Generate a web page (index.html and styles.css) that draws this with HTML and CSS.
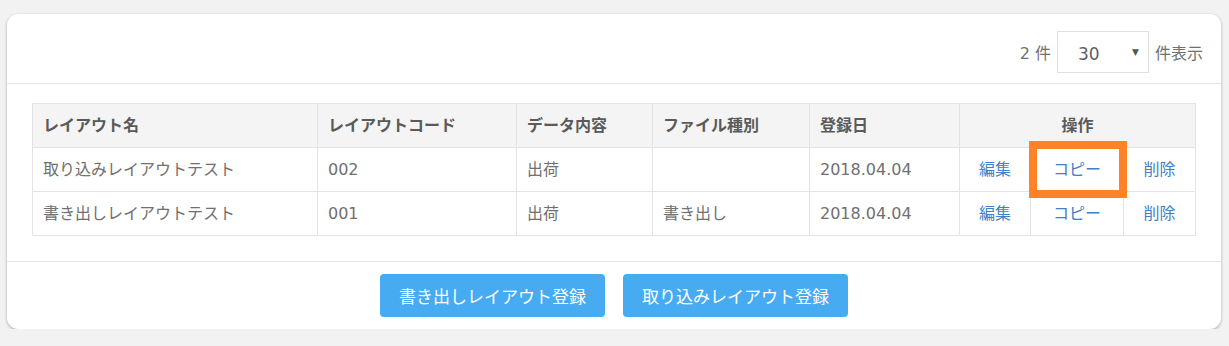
FILE: index.html
```html
<!DOCTYPE html>
<html lang="ja">
<head>
<meta charset="utf-8">
<title>レイアウト一覧</title>
<link rel="stylesheet" href="styles.css">
</head>
<body>
<div class="card">
  <div class="card-head">
    <span class="count">2 件</span>
    <div class="select">
      <span class="select-value">30</span>
      <span class="select-arrow">▼</span>
    </div>
    <span class="count">件表示</span>
  </div>
  <div class="card-body">
    <table class="list">
      <colgroup>
        <col class="c1"><col class="c2"><col class="c3"><col class="c4"><col class="c5"><col class="c6"><col class="c7"><col class="c8">
      </colgroup>
      <thead>
        <tr>
          <th>レイアウト名</th>
          <th>レイアウトコード</th>
          <th>データ内容</th>
          <th>ファイル種別</th>
          <th>登録日</th>
          <th colspan="3" class="center">操作</th>
        </tr>
      </thead>
      <tbody>
        <tr>
          <td>取り込みレイアウトテスト</td>
          <td>002</td>
          <td>出荷</td>
          <td></td>
          <td>2018.04.04</td>
          <td class="center"><a href="#">編集</a></td>
          <td class="center highlight-cell"><a href="#">コピー</a><span class="highlight"></span></td>
          <td class="center"><a href="#">削除</a></td>
        </tr>
        <tr>
          <td>書き出しレイアウトテスト</td>
          <td>001</td>
          <td>出荷</td>
          <td>書き出し</td>
          <td>2018.04.04</td>
          <td class="center"><a href="#">編集</a></td>
          <td class="center"><a href="#">コピー</a></td>
          <td class="center"><a href="#">削除</a></td>
        </tr>
      </tbody>
    </table>
  </div>
  <div class="card-foot">
    <button class="btn">書き出しレイアウト登録</button>
    <button class="btn">取り込みレイアウト登録</button>
  </div>
</div>
</body>
</html>
```
FILE: styles.css
```css
html, body {
  margin: 0;
  padding: 0;
  background: #f2f2f2;
}
body {
  padding: 14px 8px 0 7px;
  font-family: "DejaVu Sans", "Noto Sans CJK JP", sans-serif;
  font-size: 16px;
  color: #707070;
}
.card {
  background: #fff;
  border-radius: 11px;
  box-shadow: 0 1px 3px rgba(0, 0, 0, 0.32);
  height: 315px;
  box-sizing: border-box;
}
.card-head {
  display: flex;
  justify-content: flex-end;
  align-items: center;
  gap: 6px;
  padding: 17px 18px 10px;
  border-bottom: 1px solid #e6e6e6;
}
.count {
  font-size: 16px;
  color: #707070;
}
.select {
  width: 92px;
  height: 42px;
  box-sizing: border-box;
  border: 1px solid #e0e0e0;
  display: flex;
  align-items: center;
  justify-content: space-between;
  padding: 0 9px 0 20px;
  color: #606060;
}
.select-value {
  font-size: 17px;
  padding-top: 3px;
}
.select-arrow {
  font-size: 9px;
  color: #555;
}
.card-body {
  padding: 19px 25px 25px;
}
.list {
  width: 1163px;
  border-collapse: collapse;
  table-layout: fixed;
}
.c1 { width: 285px; }
.c2 { width: 199px; }
.c3 { width: 136px; }
.c4 { width: 157px; }
.c5 { width: 150px; }
.c6 { width: 71px; }
.c7 { width: 93px; }
.c8 { width: 72px; }
.list th, .list td {
  border: 1px solid #e3e3e3;
  padding: 10px 10px;
  line-height: 23px;
  text-align: left;
  white-space: nowrap;
}
.list th {
  background: #f4f4f4;
  color: #5a5a5a;
  font-weight: bold;
}
.list td {
  color: #707070;
}
.list .center {
  text-align: center;
}
.list a {
  color: #4080c4;
  text-decoration: none;
}
.highlight-cell {
  position: relative;
}
.highlight {
  position: absolute;
  left: -2px;
  top: -7px;
  width: 98px;
  height: 57px;
  box-sizing: border-box;
  border: 8px solid #ff8226;
}
.card-foot {
  display: flex;
  justify-content: center;
  gap: 18px;
  padding: 12px 0;
  border-top: 1px solid #e6e6e6;
}
.btn {
  height: 43px;
  width: 225px;
  background: #46abf1;
  color: #fff;
  border: none;
  border-radius: 4px;
  font-family: "Noto Sans CJK JP", sans-serif;
  font-size: 17px;
  padding: 0;
}
```
